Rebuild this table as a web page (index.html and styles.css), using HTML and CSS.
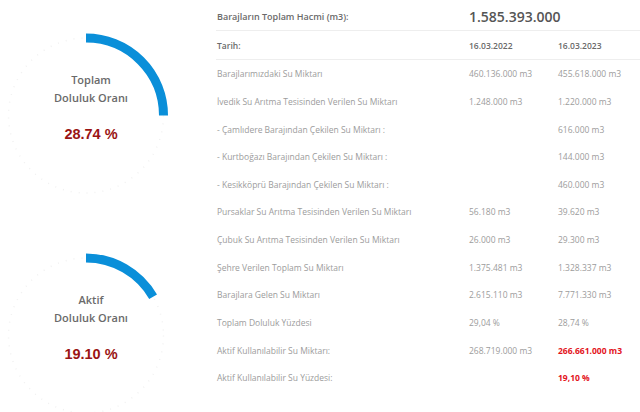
FILE: index.html
```html
<!DOCTYPE html>
<html lang="tr">
<head>
<meta charset="utf-8">
<title>Barajlar</title>
<link rel="stylesheet" href="styles.css">
</head>
<body>
<div class="page">
  <div class="gauges">
    <div class="gauge">
      <svg class="ring" viewBox="0 0 216 220" width="216" height="220">
        <circle class="track" cx="86" cy="115.5" r="77.5"/>
        <path class="arc" d="M86 38 A77.5 77.5 0 0 1 163.5 115.5"/>
      </svg>
      <div class="gauge-text">
        <div class="gauge-label">Toplam</div>
        <div class="gauge-label">Doluluk Oranı</div>
        <div class="gauge-value">28.74 %</div>
      </div>
    </div>
    <div class="gauge">
      <svg class="ring" viewBox="0 0 216 220" width="216" height="220">
        <circle class="track" cx="86" cy="115.5" r="77.5"/>
        <path class="arc" d="M86 38 A77.5 77.5 0 0 1 153.1 76.75"/>
      </svg>
      <div class="gauge-text">
        <div class="gauge-label">Aktif</div>
        <div class="gauge-label">Doluluk Oranı</div>
        <div class="gauge-value">19.10 %</div>
      </div>
    </div>
  </div>
  <div class="data">
    <div class="row head1">
      <div class="label-strong">Barajların Toplam Hacmi (m3):</div>
      <div class="big">1.585.393.000</div>
    </div>
    <div class="row head2">
      <div>Tarih:</div>
      <div>16.03.2022</div>
      <div>16.03.2023</div>
    </div>
    <div class="row"><div>Barajlarımızdaki Su Miktarı</div><div>460.136.000 m3</div><div>455.618.000 m3</div></div>
    <div class="row"><div>İvedik Su Arıtma Tesisinden Verilen Su Miktarı</div><div>1.248.000 m3</div><div>1.220.000 m3</div></div>
    <div class="row"><div>- Çamlıdere Barajından Çekilen Su Miktarı :</div><div></div><div>616.000 m3</div></div>
    <div class="row"><div>- Kurtboğazı Barajından Çekilen Su Miktarı :</div><div></div><div>144.000 m3</div></div>
    <div class="row"><div>- Kesikköprü Barajından Çekilen Su Miktarı :</div><div></div><div>460.000 m3</div></div>
    <div class="row"><div>Pursaklar Su Arıtma Tesisinden Verilen Su Miktarı</div><div>56.180 m3</div><div>39.620 m3</div></div>
    <div class="row"><div>Çubuk Su Arıtma Tesisinden Verilen Su Miktarı</div><div>26.000 m3</div><div>29.300 m3</div></div>
    <div class="row"><div>Şehre Verilen Toplam Su Miktarı</div><div>1.375.481 m3</div><div>1.328.337 m3</div></div>
    <div class="row"><div>Barajlara Gelen Su Miktarı</div><div>2.615.110 m3</div><div>7.771.330 m3</div></div>
    <div class="row"><div>Toplam Doluluk Yüzdesi</div><div>29,04 %</div><div>28,74 %</div></div>
    <div class="row"><div>Aktif Kullanılabilir Su Miktarı:</div><div>268.719.000 m3</div><div class="red">266.661.000 m3</div></div>
    <div class="row"><div>Aktif Kullanılabilir Su Yüzdesi:</div><div></div><div class="red">19,10 %</div></div>
  </div>
</div>
</body>
</html>
```

FILE: styles.css
```css
html, body {
  margin: 0;
  padding: 0;
  background: #ffffff;
}

.page {
  display: flex;
  width: 640px;
  height: 412px;
  overflow: hidden;
}

.gauges {
  width: 216px;
  flex: none;
  display: flex;
  flex-direction: column;
}

.gauge {
  display: grid;
  height: 220px;
}

.ring {
  grid-area: 1 / 1;
  display: block;
}

.track {
  fill: none;
  stroke: #f1f1f1;
  stroke-width: 1.5;
  stroke-dasharray: 1 7;
}

.arc {
  fill: none;
  stroke: #0a8fd9;
  stroke-width: 9;
  stroke-linecap: butt;
}

.gauge-text {
  grid-area: 1 / 1;
  width: 182px;
  padding-top: 71px;
  text-align: center;
  font-family: "Open Sans", sans-serif;
}

.gauge-label {
  font-size: 11px;
  font-weight: 600;
  color: #6a6a6a;
  line-height: 18px;
}

.gauge-value {
  margin-top: 18px;
  font-family: "Liberation Sans", Arial, sans-serif;
  font-size: 14.5px;
  font-weight: 700;
  color: #9a1414;
  line-height: 18px;
}

.data {
  flex: 1;
  font-family: "Open Sans", sans-serif;
  font-size: 8.5px;
  font-weight: 400;
  color: #9c9c9c;
}

.row {
  display: grid;
  grid-template-columns: 252px 89px 1fr;
  align-items: center;
  height: 27.64px;
  padding-left: 1px;
  box-sizing: border-box;
  white-space: nowrap;
}

.row.head1 {
  height: 31px;
  padding-top: 3px;
  border-bottom: 1px solid #eeeeee;
}

.row.head2 {
  height: 29px;
  border-bottom: 1px solid #eeeeee;
  font-weight: 600;
  color: #6a6a6a;
}

.label-strong {
  font-size: 9px;
  font-weight: 600;
  color: #6a6a6a;
}

.big {
  grid-column: 2 / 4;
  font-size: 14px;
  font-weight: 600;
  color: #555555;
}

.red {
  color: #e3141c;
  font-weight: 700;
}
```
